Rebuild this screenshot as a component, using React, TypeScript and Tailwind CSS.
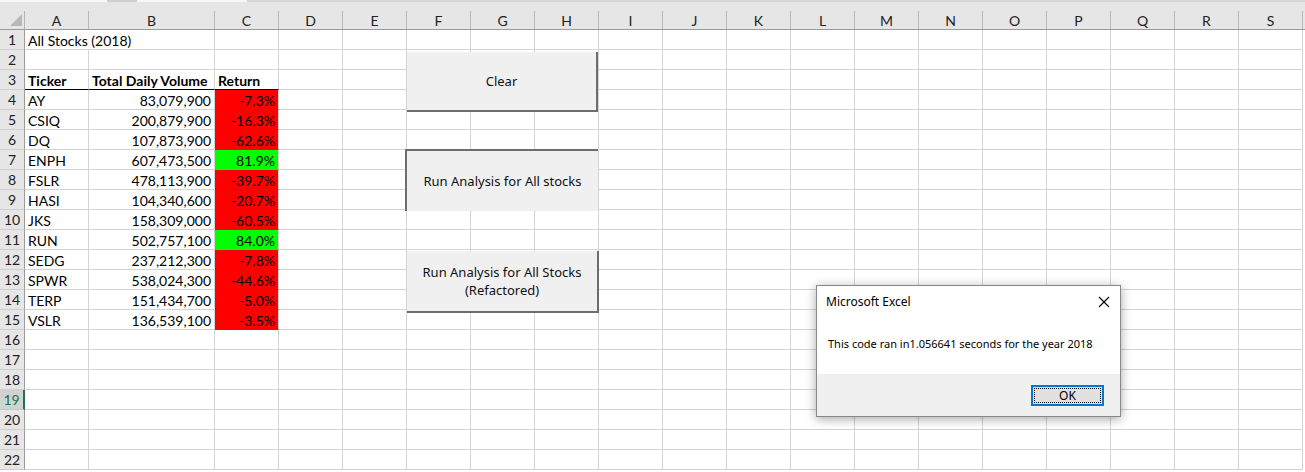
const COLS = ["A", "B", "C", "D", "E", "F", "G", "H", "I", "J", "K", "L", "M", "N", "O", "P", "Q", "R", "S"];
const WIDTHS = [64, 126, 64, 64, 64, 64, 64, 64, 64, 64, 64, 64, 64, 64, 64, 64, 64, 64, 64];

const stocks = [
    { ticker: "AY", volume: "83,079,900", ret: "-7.3%", up: false },
    { ticker: "CSIQ", volume: "200,879,900", ret: "-16.3%", up: false },
    { ticker: "DQ", volume: "107,873,900", ret: "-62.6%", up: false },
    { ticker: "ENPH", volume: "607,473,500", ret: "81.9%", up: true },
    { ticker: "FSLR", volume: "478,113,900", ret: "-39.7%", up: false },
    { ticker: "HASI", volume: "104,340,600", ret: "-20.7%", up: false },
    { ticker: "JKS", volume: "158,309,000", ret: "-60.5%", up: false },
    { ticker: "RUN", volume: "502,757,100", ret: "84.0%", up: true },
    { ticker: "SEDG", volume: "237,212,300", ret: "-7.8%", up: false },
    { ticker: "SPWR", volume: "538,024,300", ret: "-44.6%", up: false },
    { ticker: "TERP", volume: "151,434,700", ret: "-5.0%", up: false },
    { ticker: "VSLR", volume: "136,539,100", ret: "-3.5%", up: false },
];

const cellFont = { fontFamily: "Lato, 'Open Sans', sans-serif" };

function RowHeader({ n }: { n: number }) {
    const selected = n === 19;
    return (
        <div
            className={`w-[25px] shrink-0 h-full flex items-center justify-center text-[14px] border-b ${
                selected
                    ? "bg-[#d2d2d2] text-[#217346] border-r-2 border-r-[#217346] border-b-[#c6c6c6]"
                    : "bg-[#e6e6e6] text-[#222] border-r border-r-[#9b9b9b] border-b-[#cfcfcf]"
            }`}
        >
            {n}
        </div>
    );
}

function Cell({ w, children, className = "" }: { w: number; children?: React.ReactNode; className?: string }) {
    return (
        <div
            className={`shrink-0 h-full flex items-center pt-[1px] border-r border-b border-[#d4d4d4] px-[3px] text-[14px] text-black whitespace-nowrap ${className}`}
            style={{ width: w }}
        >
            {children}
        </div>
    );
}

function SheetRow({ n }: { n: number }) {
    const stock = n >= 4 && n <= 15 ? stocks[n - 4] : null;
    return (
        <div className="flex h-[20px]">
            <RowHeader n={n} />
            {WIDTHS.map((w, i) => {
                if (n === 1 && i === 0) {
                    return (
                        <Cell key={i} w={w} className="border-r-0 overflow-visible z-10">
                            All Stocks (2018)
                        </Cell>
                    );
                }
                if (n === 3 && i < 3) {
                    const labels = ["Ticker", "Total Daily Volume", "Return"];
                    return (
                        <Cell key={i} w={w} className="font-bold border-b-black">
                            {labels[i]}
                        </Cell>
                    );
                }
                if (stock && i === 0) return <Cell key={i} w={w}>{stock.ticker}</Cell>;
                if (stock && i === 1)
                    return (
                        <Cell key={i} w={w} className="justify-end">
                            {stock.volume}
                        </Cell>
                    );
                if (stock && i === 2)
                    return (
                        <Cell
                            key={i}
                            w={w}
                            className={`justify-end ${
                                stock.up ? "bg-[#00ff00] border-b-[#00ff00]" : "bg-[#ff0000] border-b-[#ff0000]"
                            }`}
                        >
                            {stock.ret}
                        </Cell>
                    );
                return <Cell key={i} w={w} />;
            })}
        </div>
    );
}

function SheetButton({
    className,
    pressed,
    children,
}: {
    className: string;
    pressed?: boolean;
    children: React.ReactNode;
}) {
    return (
        <div
            className={`absolute flex items-center justify-center text-center bg-[#f0f0f0] text-[13px] leading-[18px] text-[#111] ${
                pressed ? "border-l-2 border-t-2 border-[#6d6d6d]" : "border-r-2 border-b-2 border-[#6d6d6d]"
            } ${className}`}
            style={{ fontFamily: "'Noto Sans', 'Open Sans', sans-serif" }}
        >
            {children}
        </div>
    );
}

function MessageBox() {
    return (
        <div
            className="absolute left-[816px] top-[285px] w-[305px] h-[132px] bg-white border border-[#888] shadow-[0_2px_10px_rgba(0,0,0,0.35)] flex flex-col text-[11px] text-black whitespace-nowrap"
            style={{ fontFamily: "'Noto Sans', 'Open Sans', sans-serif" }}
        >
            <div className="h-[30px] flex items-center justify-between pl-[9px] pr-[10px] pt-[2px] text-[12px]">
                <span>Microsoft Excel</span>
                <svg width="12" height="12" viewBox="0 0 12 12" className="text-black">
                    <path d="M1 1 L11 11 M11 1 L1 11" stroke="currentColor" strokeWidth="1.1" />
                </svg>
            </div>
            <div className="flex-1 flex items-center pl-[11px] pb-[2px]">This code ran in1.056641 seconds for the year 2018</div>
            <div className="h-[42px] bg-[#f0f0f0] flex items-center justify-end pr-[16px] pt-[1px]">
                <div className="w-[73px] h-[21px] border-2 border-[#0078d7] bg-[#e1e1e1] p-[1px]">
                    <div className="w-full h-full border border-dotted border-black flex items-center justify-center leading-none text-[12px]">
                        OK
                    </div>
                </div>
            </div>
        </div>
    );
}

export default function App() {
    return (
        <div className="relative w-[1305px] h-[472px] overflow-hidden bg-white" style={cellFont}>
            {/* top strip */}
            <div className="h-[11px] bg-[#e6e6e6] relative">
                <div className="flex h-[2px]">
                    <div className="w-[107px] bg-[#f7f7f7]" />
                    <div className="w-[30px] bg-[#cfcfcf]" />
                    <div className="w-[110px] bg-[#f7f7f7]" />
                    <div className="flex-1 bg-[#d6d6d6]" />
                </div>
            </div>
            {/* column headers */}
            <div className="flex h-[19px] bg-[#e6e6e6] border-b border-[#9b9b9b]">
                <div className="w-[25px] shrink-0 border-r border-[#b4b4b4] relative">
                    <svg width="12" height="12" viewBox="0 0 12 12" className="absolute left-[10px] top-[3px]">
                        <path d="M12 0 L12 12 L0 12 Z" fill="#b8b8b8" />
                    </svg>
                </div>
                {COLS.map((c, i) => (
                    <div
                        key={c}
                        className="shrink-0 h-full flex items-center justify-center border-r border-[#b9b9b9] text-[14px] text-[#222]"
                        style={{ width: WIDTHS[i] }}
                    >
                        {c}
                    </div>
                ))}
            </div>
            {Array.from({ length: 22 }, (_, i) => (
                <SheetRow key={i} n={i + 1} />
            ))}

            <SheetButton className="left-[407px] top-[52px] w-[191px] h-[60px]">Clear</SheetButton>
            <SheetButton pressed className="left-[405px] top-[149px] w-[193px] h-[62px]">
                Run Analysis for All stocks
            </SheetButton>
            <SheetButton className="left-[407px] top-[251px] w-[192px] h-[62px]">
                Run Analysis for All Stocks
                <br />
                (Refactored)
            </SheetButton>

            <MessageBox />
        </div>
    );
}
